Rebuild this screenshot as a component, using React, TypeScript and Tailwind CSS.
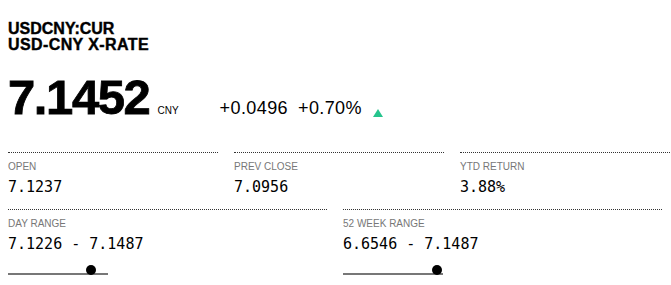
import { FC } from "react";

const sans = "font-['Liberation_Sans',Arial,sans-serif]";
const mono = "font-['DejaVu_Sans_Mono',monospace]";

const Stat: FC<{ label: string; value: string; className: string }> = ({ label, value, className }) => (
  <div className={`${className} border-t border-dotted border-[#333]`}>
    <div className={`${sans} mt-[8px] text-[10px] leading-[12px] text-[#777]`}>{label}</div>
    <div className={`${mono} mt-[5px] text-[15px] leading-[18px] text-black`}>{value}</div>
  </div>
);

const RangeStat: FC<{ label: string; value: string; dot: number }> = ({ label, value, dot }) => (
  <div className="w-[319px] shrink-0 border-t border-dotted border-[#333]">
    <div className={`${sans} mt-[8px] text-[10px] leading-[12px] text-[#777]`}>{label}</div>
    <div className={`${mono} mt-[5px] text-[15px] leading-[18px] text-black`}>{value}</div>
    <div className="relative mt-3 h-[11px] w-[100px]">
      <div className="absolute bottom-[1px] left-0 h-[2px] w-full bg-[#777]" />
      <div className="absolute top-0 h-[10px] w-[10px] rounded-full bg-black" style={{ left: dot }} />
    </div>
  </div>
);

const App: FC = () => {
  return (
    <div className="w-[671px] h-[285px] overflow-hidden bg-white px-2 pt-[21px]">
      <div className={`${sans} text-[16px] font-bold leading-4 text-black [-webkit-text-stroke:0.4px_black]`}>
        <div>USDCNY:CUR</div>
        <div className="tracking-[0.4px]">USD-CNY X-RATE</div>
      </div>

      <div className={`${sans} mt-5 flex items-baseline text-black`}>
        <span className="text-[49px] font-bold leading-[49px] tracking-[-1.4px] [-webkit-text-stroke:0.8px_black]">
          7.1452
        </span>
        <span className="ml-[8px] text-[10px]">CNY</span>
        <span className="ml-[41px] text-[18px] tracking-[0.4px]">+0.0496</span>
        <span className="ml-[10px] text-[18px] tracking-[0.4px]">+0.70%</span>
        <svg className="ml-[11px] self-end mb-[5px]" width="10" height="8" viewBox="0 0 10 8">
          <polygon points="5,0 10,8 0,8" fill="#26c48d" />
        </svg>
      </div>

      <div className="mt-[30px] flex gap-4">
        <Stat className="w-[210px] shrink-0" label="OPEN" value="7.1237" />
        <Stat className="w-[210px] shrink-0" label="PREV CLOSE" value="7.0956" />
        <Stat className="w-[210px] shrink-0" label="YTD RETURN" value="3.88%" />
      </div>

      <div className="mt-[13px] flex gap-4">
        <RangeStat label="DAY RANGE" value="7.1226 - 7.1487" dot={78} />
        <RangeStat label="52 WEEK RANGE" value="6.6546 - 7.1487" dot={89} />
      </div>
    </div>
  );
};

export default App;
